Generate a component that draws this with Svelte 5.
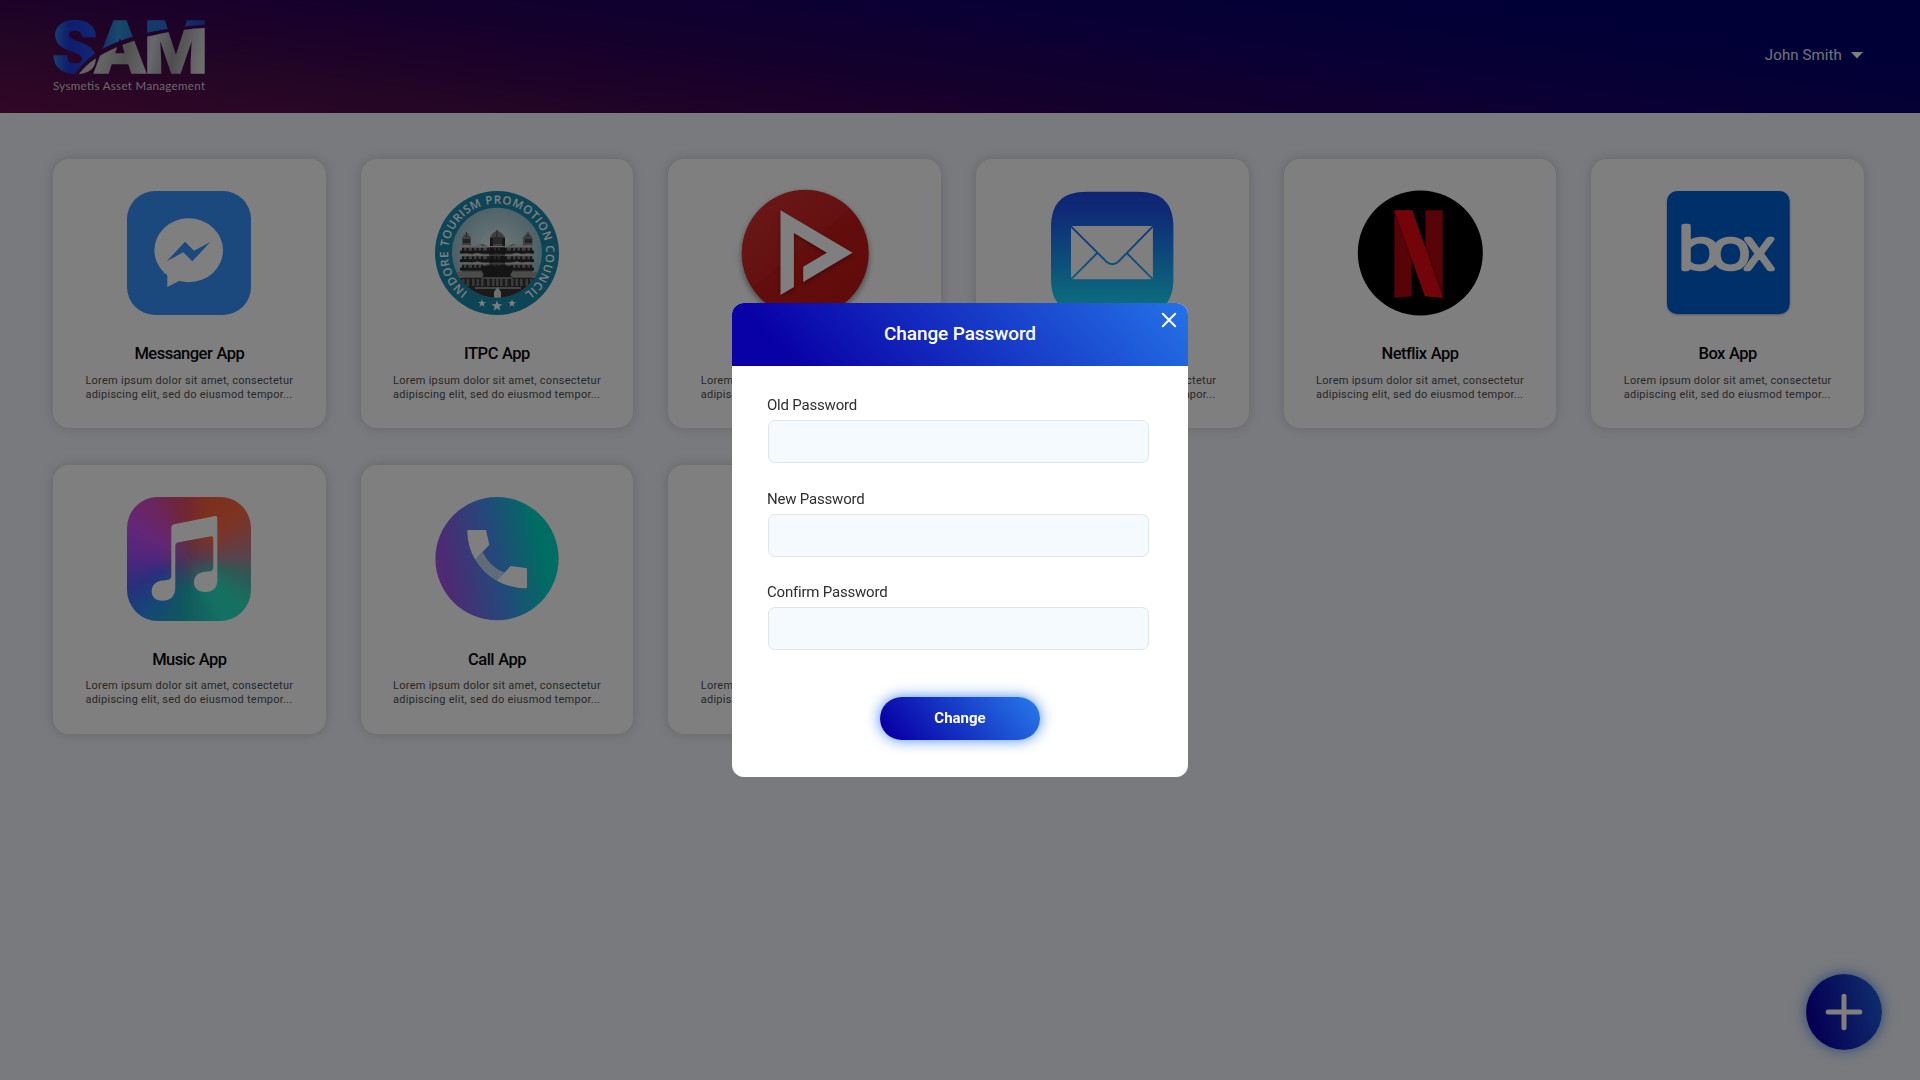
<script>
  const blurb = ['Lorem ipsum dolor sit amet, consectetur', 'adipiscing elit, sed do eiusmod tempor...'];
  const apps = [
    { name: 'Messanger App', icon: 'messenger' },
    { name: 'ITPC App', icon: 'itpc' },
    { name: 'Player App', icon: 'player' },
    { name: 'Mail App', icon: 'mail' },
    { name: 'Netflix App', icon: 'netflix' },
    { name: 'Box App', icon: 'box' },
    { name: 'Music App', icon: 'music' },
    { name: 'Call App', icon: 'call' },
    { name: 'Notes App', icon: 'none' }
  ];
  const fields = ['Old Password', 'New Password', 'Confirm Password'];
  const storeys = [55, 63.5, 72];
  const bays = [27, 31.5, 37, 41.5, 46, 52, 57, 61, 65, 70, 76, 80.5, 85, 90.5, 95];
  const star = '0,-5 1.3,-1.6 5,-1.6 2,.7 3.1,4.3 0,2.1 -3.1,4.3 -2,.7 -5,-1.6 -1.3,-1.6';
</script>

<div class="page">
  <header>
    <svg class="logo" width="160" height="78" viewBox="50 16 160 78">
      <defs>
        <linearGradient id="blue" x1="4" x2="155" y1="0" y2="0" gradientUnits="userSpaceOnUse">
          <stop offset="0" stop-color="#2f7fe0" /><stop offset=".1" stop-color="#2038dc" />
          <stop offset=".28" stop-color="#2050ea" /><stop offset=".42" stop-color="#2f93d8" />
          <stop offset=".55" stop-color="#2578d0" /><stop offset=".8" stop-color="#2c70e0" /><stop offset="1" stop-color="#2040c0" />
        </linearGradient>
        <linearGradient id="steel" x1="4" x2="155" y1="4" y2="34" gradientUnits="userSpaceOnUse">
          <stop offset="0" stop-color="#bcbcbc" /><stop offset=".35" stop-color="#cacaca" />
          <stop offset=".5" stop-color="#a4a4a4" /><stop offset=".66" stop-color="#cfd0da" />
          <stop offset=".8" stop-color="#9c9c9c" /><stop offset="1" stop-color="#dcdcdc" />
        </linearGradient>
        <pattern id="swoosh" patternUnits="userSpaceOnUse" x="50" y="16" width="160" height="62">
          <path d="M0 0H160V8.5Q126 10 96 17Q60 26 43 39Q32 48 23 60H0Z" fill="url(#blue)" />
          <path d="M160 11.500Q126 13 96 21Q62 31 45 43Q34 50 26 62H160Z" fill="url(#steel)" />
        </pattern>
      </defs>
      <g class="mark">
        <text x="52" y="73" textLength="45.500" lengthAdjust="spacingAndGlyphs">S</text>
        <text x="94.500" y="73" textLength="51" lengthAdjust="spacingAndGlyphs">A</text>
        <text x="144" y="73" textLength="64" lengthAdjust="spacingAndGlyphs">M</text>
      </g>
      <text class="tag" x="53" y="89.5" textLength="152">Sysmetis Asset Management</text>
    </svg>
    <div class="user">
      <span>John Smith</span>
      <svg width="12" height="7" viewBox="0 0 12 7"><path d="M0 0H12L6 6.5Z" fill="#fff" /></svg>
    </div>
  </header>

  <main>
    {#each apps as app}
      <article>
        <div class="icon {app.icon}">
          <svg width="124" height="124" viewBox="0 0 124 124">
            {#if app.icon === 'messenger'}
              <rect width="124" height="124" rx="28" fill="#3692fa" />
              <ellipse cx="61.7" cy="59.3" rx="34.3" ry="32" fill="#fff" />
              <path d="M40.3 80V96L54 89Z" fill="#fff" />
              <path d="M39.7 70.3L58 50.7L67 59.7L83.3 51L65.3 70.3L56.3 61.3Z" fill="#3692fa" />
            {:else if app.icon === 'itpc'}
              <defs>
                <radialGradient id="sky" cx=".5" cy=".45" r=".55"><stop offset="0" stop-color="#e4f0f0" /><stop offset="1" stop-color="#8fbecb" /></radialGradient>
                <clipPath id="disc"><circle cx="62" cy="61.7" r="45" /></clipPath>
                <path id="ring" d="M32.8 101.1A49 49 0 1 1 91.2 101.1" />
              </defs>
              <circle cx="62" cy="62" r="62" fill="#1a8aae" />
              <circle cx="62" cy="61.7" r="45" fill="url(#sky)" />
              <g clip-path="url(#disc)">
                <path d="M27 47Q31.500 38 36 47V56L47 53L55 56V46Q62 34 70 46V56L78 53L88 56V47Q93 38 97.500 47V110H27Z" fill="#808080" />
                <path d="M61.3 39H62.700V46H61.300ZM31 41H32V46H31ZM92.500 41H93.500V46H92.500Z" fill="#555" />
                <rect x="28" y="48" width="7" height="4" fill="#444" /><rect x="90" y="48" width="7" height="4" fill="#444" />
                <rect x="57" y="46" width="11" height="7" fill="#555" />
                <rect x="55" y="47" width="3" height="32" fill="#303030" /><rect x="67" y="47" width="3" height="32" fill="#303030" />
                {#each storeys as y}
                  <rect x="25" y={y + 4.6} width="74" height="3" fill="#2c2c2c" />
                  <path d="M25 {y}Q31 {y - 2} 37 {y}Q42 {y - 3} 48 {y}H76Q82 {y - 3} 87 {y}Q93 {y - 2} 99 {y}V{y + 1.400}H25Z" fill="#c4c4c4" />
                  {#each bays as x}<rect {x} y={y + 1.8} width="2" height="3.4" rx="1" fill="#2b2b2b" />{/each}
                {/each}
                <rect x="54" y="56" width="16" height="31" fill="#222" opacity=".5" />
                <rect x="47" y="75" width="30" height="12" fill="#292929" />
                <path d="M17 81H47Q50 84 47 86H17ZM77 81H107V86H77Q74 84 77 81Z" fill="#999" />
                <rect x="17" y="87" width="90" height="25" fill="#343434" />
                {#each bays as x}<rect {x} y="88" width="2.600" height="7" fill="#747474" />{/each}
                <rect x="47" y="86" width="30" height="2" fill="#777" />
                <rect x="40" y="96" width="46" height="2" fill="#888" />
                <path d="M59 107V101L62.500 96L66 101V107Z" fill="#ddd" />
              </g>
              <text class="ring"><textPath href="#ring" textLength="247" lengthAdjust="spacing">INDORE TOURISM PROMOTION COUNCIL</textPath></text>
              <polygon points={star} transform="translate(47 112.3) scale(.8)" fill="#fff" />
              <polygon points={star} transform="translate(62 115) scale(1.1)" fill="#fff" />
              <polygon points={star} transform="translate(77 112.3) scale(.8)" fill="#fff" />
            {:else if app.icon === 'player'}
              <defs><linearGradient id="red" x1="0" y1="0" x2=".8" y2="1"><stop offset="0" stop-color="#d63232" /><stop offset=".5" stop-color="#ca2222" /><stop offset=".52" stop-color="#c61b1b" /><stop offset="1" stop-color="#c21616" /></linearGradient></defs>
              <circle cx="62.2" cy="62.300" r="63.5" fill="url(#red)" />
              <path class="lift" d="M37.5 19.3L109.5 61.7L60.2 91V75.7L83.9 61.7L50.9 42V96L37.5 104Z" fill="#fff" />
            {:else if app.icon === 'mail'}
              <defs><linearGradient id="sea" x1="0" y1="0" x2="0" y2="124" gradientUnits="userSpaceOnUse"><stop offset="0" stop-color="#1e48e8" /><stop offset=".2" stop-color="#1e5af0" /><stop offset="1" stop-color="#18e8fa" /></linearGradient></defs>
              <g transform="translate(.7 0)">
                <path d="M.3 36C.3 12 12 .7 36 .7H87C111 .7 122.700 12 122.700 36V88C122.700 112 111 123 87 123H36C12 123 .3 112 .3 88Z" fill="url(#sea)" />
                <rect x="20.3" y="35" width="81.9" height="53.3" rx="1" fill="#fff" />
                <path d="M20.300 35.300L56 71Q61.7 75.500 67.300 71L102.200 35.300M46.6 62L20.300 88.300M76 62L102.200 88.300" fill="none" stroke="url(#sea)" stroke-width="1.9" />
              </g>
            {:else if app.icon === 'netflix'}
              <circle cx="62.300" cy="62" r="62.5" fill="#000" />
              <path d="M36.4 19.3H53.7V105.3L36.4 106.7ZM67.4 19.3H84.7V106.7L67.400 105.300Z" fill="#b0060f" />
              <path d="M36.400 22L53.700 72V62L38 19.300ZM67.400 53L84.700 100V106L67.400 60Z" fill="#700" opacity=".5" />
              <path d="M36.4 19.3H54.4L84.7 106.7L66.7 105Z" fill="#e50914" />
            {:else if app.icon === 'box'}
              <rect x="1" width="122.7" height="123" rx="10" fill="#0061d5" />
              <g class="wordmark">
                <text x="12" y="78" textLength="42" lengthAdjust="spacingAndGlyphs">b</text>
                <text x="45" y="78" textLength="39" lengthAdjust="spacingAndGlyphs">o</text>
                <text x="78.500" y="78" textLength="29.500" lengthAdjust="spacingAndGlyphs">x</text>
              </g>
            {:else if app.icon === 'music'}
              <path d="M44.300 31Q44.300 28 47 27.300L88.300 19Q90.300 18.500 90.300 20.500V83C90.300 91 86 95 78 95C71 95 67 91 67 85.500C67 79 71.500 75.200 79 74.800C84 74.300 86.300 74 86.300 70.500V41.300Q86.300 39 84 39.300L50.500 45.600Q48.300 46 48.300 48.500V90C48.300 99 44 103.700 35.500 103.700C28.500 103.700 24.700 100 24.700 94.500C24.700 88 29 84 36.500 83.500C42 83 44.300 82.500 44.300 78.500Z" fill="#fff" />
            {:else if app.icon === 'call'}
              <defs><linearGradient id="dial" x1="0" y1=".6" x2="1" y2=".4"><stop offset="0" stop-color="#a454e4" /><stop offset=".1" stop-color="#9658e8" /><stop offset=".5" stop-color="#4494f4" /><stop offset=".85" stop-color="#00d8c8" /><stop offset="1" stop-color="#00dcc4" /></linearGradient></defs>
              <circle cx="62" cy="61.7" r="61.6" fill="url(#dial)" />
              <path d="M40.3 62.7L47.7 55.3Q55 70 69.3 75.7L61.7 83.7Q48 76 40.300 62.700Z" fill="#d4e6ee" opacity=".85" />
              <path d="M33.300 33H51L54.3 47.7L40.3 62.7Q32.500 50 32.300 34Q32.300 33 33.300 33ZM69.3 75.7L75.7 69L91 71Q92 71.200 92 72.300V90.300Q92 91.300 91 91.300Q75 91 61.7 83.7Z" fill="#fff" />
            {/if}
          </svg>
        </div>
        <h2>{app.name}</h2>
        <p>{blurb[0]}<br />{blurb[1]}</p>
      </article>
    {/each}
  </main>

  <button class="fab" aria-label="Add app">
    <svg width="38" height="38" viewBox="0 0 38 38"><path d="M19 3.200V34.800M3.200 19H34.800" stroke="#fff" stroke-width="5" stroke-linecap="round" /></svg>
  </button>
</div>

<div class="overlay">
  <section class="modal">
    <div class="head">
      <h1>Change Password</h1>
      <button class="close" aria-label="Close">
        <svg width="16" height="16" viewBox="0 0 16 16"><path d="M1.800 1.800L14.200 14.200M14.200 1.800L1.800 14.200" stroke="#fff" stroke-width="2" stroke-linecap="round" /></svg>
      </button>
    </div>
    <form>
      {#each fields as field}
        <label><span>{field}</span><input type="password" /></label>
      {/each}
      <button type="button" class="submit">Change</button>
    </form>
  </section>
</div>

<style>
  :global(body) { background: #f2f4fb; font-family: Roboto, 'Liberation Sans', sans-serif; }
  .page { height: 1080px; overflow: hidden; background: #f2f4fb; }
  header {
    height: 112.500px; box-sizing: border-box; padding: 16px 57px 0 50px;
    display: flex; justify-content: space-between; align-items: flex-start;
    background: linear-gradient(8deg, #62104c 0%, #4a0c4a 18%, #2c0058 40%, #120068 64%, #00006e 85%);
  }
  .logo { display: block; overflow: visible; }
  .mark { font: 900 73px Roboto, sans-serif; fill: url(#swoosh); stroke: url(#swoosh); stroke-width: 1.500px; }
  .tag { font: 400 11.500px Lato, sans-serif; fill: #d6d0da; }
  .user { display: flex; align-items: center; gap: 9px; height: 24px; margin-top: 27px; color: #e6e6ee; font-size: 15px; letter-spacing: .12px; }
  main {
    display: grid; grid-template-columns: repeat(6, 1fr); grid-auto-rows: 269px;
    gap: 36.700px 35px; padding: 46.800px 56px 0 53px;
  }
  article {
    box-sizing: border-box; padding-top: 31.700px; border-radius: 16px; background: #fff;
    box-shadow: 0 0 12px rgba(0, 0, 0, .17);
    display: flex; flex-direction: column; align-items: center;
  }
  .icon { width: 124px; height: 124px; }
  .icon svg { display: block; overflow: visible; }
  .player svg { filter: drop-shadow(0 3px 3px rgba(0, 0, 0, .45)); }
  .lift { filter: drop-shadow(0 2px 2px rgba(0, 0, 0, .3)); }
  .box svg { filter: drop-shadow(0 1px 1px rgba(0, 60, 140, .4)); }
  .music {
    border-radius: 31px;
    background:
      radial-gradient(circle, #a068a0 0, rgba(160, 104, 160, .6) 14%, rgba(160, 104, 160, 0) 36%),
      conic-gradient(#e4505c, #f8603c 20deg, #fc6842 45deg, #e0706c 65deg, #b08898 88deg, #60b0a8 105deg, #2ce0c0 130deg, #28e0c4 150deg, #20b0b8 185deg, #2c8cf0 220deg, #5060f8 243deg, #9a4cfa 268deg, #c84cf0 300deg, #d44cc0 325deg, #dc4c80 345deg, #e4505c);
  }
  .ring { font: 600 11.500px 'Open Sans', sans-serif; fill: #fff; }
  .wordmark { font: 300 60px Lato, sans-serif; fill: #fff; stroke: #fff; stroke-width: 4.500px; stroke-linejoin: round; }
  h2 { margin: 27px 0 0; font-size: 16.500px; line-height: 24px; font-weight: 500; letter-spacing: -.5px; word-spacing: .5px; color: #080808; white-space: nowrap; }
  p { margin: 7.600px 0 0; font-size: 11px; line-height: 14px; letter-spacing: .26px; color: #505050; white-space: nowrap; }
  button { border: 0; padding: 0; font-family: inherit; cursor: pointer; }
  .fab {
    position: fixed; right: 38px; bottom: 30px; width: 76px; height: 76px; border-radius: 50%;
    display: grid; place-items: center;
    background: linear-gradient(75deg, #0a00a8 15%, #2575e8 115%);
    box-shadow: 0 0 14px rgba(37, 117, 232, .8);
  }
  .overlay { position: fixed; inset: 0; display: flex; align-items: center; justify-content: center; background: rgba(0, 0, 0, .5); }
  .modal { width: 456px; height: 474.500px; margin-bottom: .5px; border-radius: 12px; background: #fff; overflow: hidden; }
  .head {
    position: relative; height: 63.500px; display: flex; justify-content: center; align-items: center;
    background: linear-gradient(48deg, #0900a6 12%, #2575e8 102%);
  }
  h1 { margin: 0; padding-bottom: 2px; font-size: 19px; font-weight: 500; letter-spacing: -.1px; color: #fff; }
  .close { position: absolute; top: 9px; right: 10.800px; width: 16px; height: 16px; background: none; }
  .close svg { display: block; }
  form { display: flex; flex-direction: column; align-items: stretch; padding: 29px 39px 0 35px; }
  label { display: flex; flex-direction: column; height: 93.500px; font-size: 15px; line-height: 20px; letter-spacing: -.2px; color: #2e2e2e; }
  input {
    box-sizing: border-box; width: 380.500px; height: 43px; margin: 5px 0 0 1px; padding: 0 12px;
    border: 1px solid #e1e5e8; border-radius: 7px; background: #f5faff; outline: none;
  }
  .submit {
    align-self: center; width: 160px; height: 43px; margin: 21px 0 0 4px; border-radius: 22px;
    background: linear-gradient(50deg, #0900a6 8%, #2575e8 95%);
    box-shadow: 0 0 14px rgba(37, 117, 232, .85);
    color: #fff; font-size: 15px; font-weight: 700;
  }
</style>
